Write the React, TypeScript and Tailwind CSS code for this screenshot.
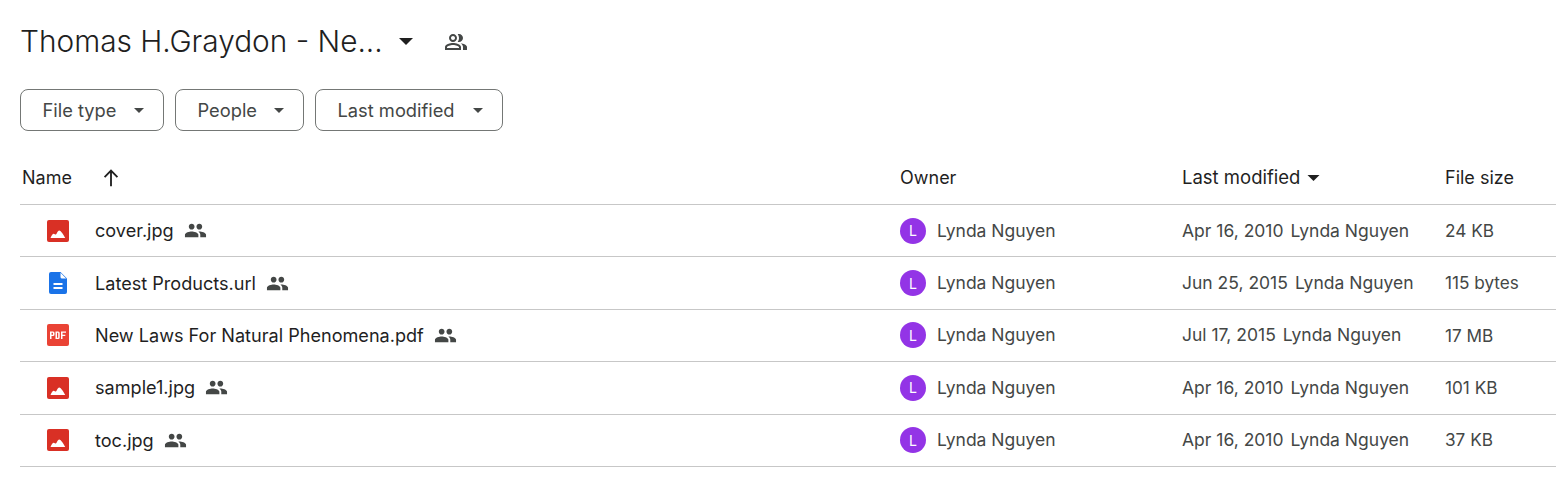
import React from 'react';

const files = [
  { name: 'cover.jpg', type: 'image', date: 'Apr 16, 2010', size: '24 KB' },
  { name: 'Latest Products.url', type: 'doc', date: 'Jun 25, 2015', size: '115 bytes' },
  { name: 'New Laws For Natural Phenomena.pdf', type: 'pdf', date: 'Jul 17, 2015', size: '17 MB' },
  { name: 'sample1.jpg', type: 'image', date: 'Apr 16, 2010', size: '101 KB' },
  { name: 'toc.jpg', type: 'image', date: 'Apr 16, 2010', size: '37 KB' },
];

const columns = 'grid grid-cols-[880px_282px_263px_111px]';

const Caret = ({ className }: { className: string }) => (
  <svg viewBox="0 0 10 5" className={className} fill="currentColor">
    <path d="M0 0l5 5 5-5z" />
  </svg>
);

const SharedIcon = () => (
  <svg viewBox="0 0 24 24" className="w-[23px] h-[23px] text-[#444746]" fill="currentColor">
    <path d="M16 11c1.66 0 2.99-1.34 2.99-3S17.66 5 16 5s-3 1.34-3 3 1.34 3 3 3zm-8 0c1.66 0 2.99-1.34 2.99-3S9.66 5 8 5 5 6.34 5 8s1.34 3 3 3zm0 2c-2.33 0-7 1.17-7 3.5V19h14v-2.500C15 14.170 10.330 13 8 13zm8 0c-.29 0-.62.02-.97.05 1.160.840 1.970 1.970 1.970 3.450V19h6v-2.500c0-2.330-4.670-3.500-7-3.500z" />
  </svg>
);

const FileIcon = ({ type }: { type: string }) => {
  if (type === 'doc') {
    return (
      <svg viewBox="0 0 18 22" className="w-[18px] h-[22px]">
        <path d="M2 0h9.500L18 6.500V20a2 2 0 0 1-2 2H2a2 2 0 0 1-2-2V2a2 2 0 0 1 2-2z" fill="#1a73e8" />
        <path d="M11.500 0.800L17.200 6.500H13a1.500 1.500 0 0 1-1.500-1.500z" fill="#fff" />
        <path d="M4.500 11h9v2h-9zM4.500 15h9v2h-9z" fill="#fff" />
      </svg>
    );
  }
  if (type === 'pdf') {
    return (
      <svg viewBox="0 0 22 22" className="w-[22px] h-[22px]">
        <rect width="22" height="22" rx="2" fill="#ea4335" />
        <path
          d="M3 7.500h3a1.500 1.500 0 0 1 1.500 1.500v1.500A1.500 1.500 0 0 1 6 12H4.500v3H3zm1.500 1.300v1.900H6V8.800zM8.500 7.500h2.700a1.500 1.500 0 0 1 1.500 1.500v4.500a1.500 1.500 0 0 1-1.500 1.500H8.500zM10 8.800v4.900h1.200V8.800zM14 7.500h5v1.300h-3.500v1.900h2.800V12h-2.800v3H14z"
          fill="#fff"
        />
      </svg>
    );
  }
  return (
    <svg viewBox="0 0 22 22" className="w-[22px] h-[22px]">
      <rect width="22" height="22" rx="2" fill="#d93025" />
      <path d="M3.500 18c.8-2.300 2.200-4.300 3.300-4.300.8 0 1.200.8 1.900.8 1 0 1.800-4 3.500-4 1.700 0 4.800 5 6 7.500z" fill="#fff" />
    </svg>
  );
};

const FilterChip = ({ label, width }: { label: string; width: string }) => (
  <button className={`${width} h-[42px] flex items-center justify-between pl-[21.500px] pr-[19px] border border-[#747775] rounded-[8px] text-[#444746] text-[18.300px]`}>
    <span className="pt-[1px]">{label}</span>
    <Caret className="w-[10px] h-[5px] text-[#444746]" />
  </button>
);

export default function App() {
  return (
    <div className="bg-white h-[503px] pl-[20px] overflow-hidden text-[#1f1f1f]" style={{ fontFamily: 'Inter, sans-serif' }}>
      <div className="h-[89px] flex items-center pb-[6px]">
        <h1 className="text-[29.800px] font-light w-[379px] whitespace-nowrap">Thomas H.Graydon - Ne...</h1>
        <Caret className="w-[14px] h-[7px] text-[#1f1f1f]" />
        <svg viewBox="0 0 24 24" className="ml-[31px] w-[24px] h-[24px] text-[#444746]" fill="currentColor">
          <path d="M16.670 13.130C18.040 14.060 19 15.320 19 17v3h4v-3c0-2.180-3.570-3.470-6.330-3.870zM15 12c2.210 0 4-1.790 4-4s-1.790-4-4-4c-.47 0-.91.1-1.330.24C14.500 5.270 15 6.580 15 8s-.5 2.730-1.330 3.760c.42.14.86.24 1.330.24zM9 12c2.210 0 4-1.790 4-4s-1.790-4-4-4-4 1.790-4 4 1.790 4 4 4zm0-6c1.100 0 2 .9 2 2s-.9 2-2 2-2-.9-2-2 .9-2 2-2zM9 13c-2.670 0-8 1.340-8 4v3h16v-3c0-2.660-5.330-4-8-4zm6 5H3v-.99C3.200 16.290 6.300 15 9 15s5.800 1.290 6 2v1z" />
        </svg>
      </div>

      <div className="flex gap-[11px]">
        <FilterChip label="File type" width="w-[144px]" />
        <FilterChip label="People" width="w-[129px]" />
        <FilterChip label="Last modified" width="w-[187.500px]" />
      </div>

      <div className={`${columns} h-[74px] items-center border-b border-[#c7c7c7] text-[18px] pt-[20px]`}>
        <div className="flex items-center pl-[2px]">
          <span className="w-[78px]">Name</span>
          <svg viewBox="0 0 24 24" className="w-[22px] h-[22px]" fill="none" stroke="currentColor" strokeWidth="2">
            <path d="M12 21V4M5 11l7-7 7 7" />
          </svg>
        </div>
        <div>Owner</div>
        <div className="flex items-center gap-[7px]">
          <span className="text-[18.500px]">Last modified</span>
          <Caret className="w-[13px] h-[6px] text-[#1f1f1f]" />
        </div>
        <div>File size</div>
      </div>

      {files.map(file => (
        <div key={file.name} className={`${columns} h-[52.400px] items-center border-b border-[#c7c7c7]`}>
          <div className="flex items-center">
            <div className="w-[75px] flex justify-center">
              <FileIcon type={file.type} />
            </div>
            <span className="text-[18.100px]">{file.name}</span>
            <span className="ml-[10px] flex"><SharedIcon /></span>
          </div>
          <div className="flex items-center gap-[11px] text-[#444746]">
            <div className="w-[26px] h-[26px] rounded-full bg-[#9334e6] text-white text-[14px] flex items-center justify-center">L</div>
            <span className="text-[17.500px]">Lynda Nguyen</span>
          </div>
          <div className="flex items-center gap-[7px] text-[#444746] text-[17.500px]">
            <span>{file.date}</span>
            <span>Lynda Nguyen</span>
          </div>
          <div className="text-[#444746] text-[17.200px]">{file.size}</div>
        </div>
      ))}
    </div>
  );
}
